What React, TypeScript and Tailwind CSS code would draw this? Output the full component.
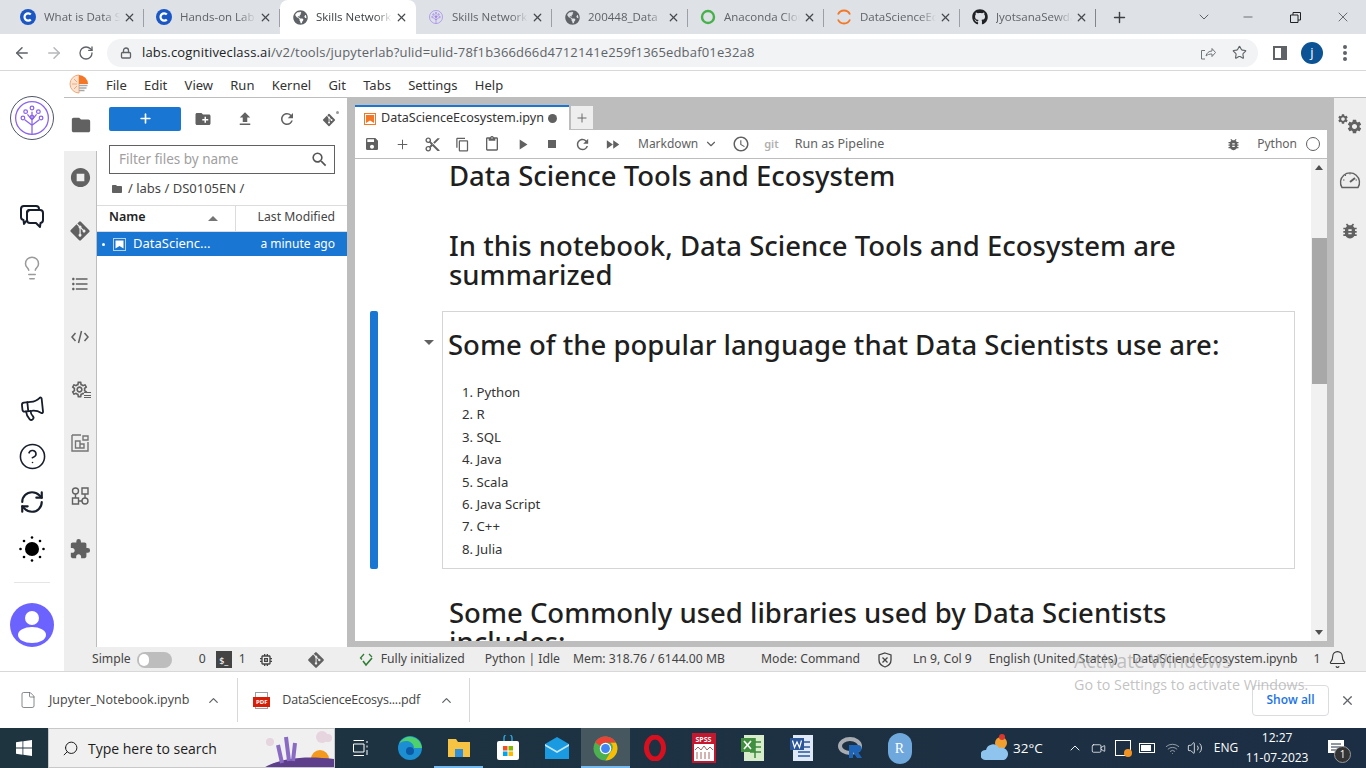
import {
  ArrowLeft,
  ArrowRight,
  RotateCw,
  Lock,
  Star,
  X,
  Plus,
  ChevronDown,
  ChevronUp,
  Minus,
  Lightbulb,
  Megaphone,
  CircleHelp,
  RefreshCw,
  Search,
  File,
  Bell,
  Volume2,
  Wifi,
  Video,
} from "lucide-react";
import {
  MdFolder,
  MdCreateNewFolder,
  MdFileUpload,
  MdRefresh,
  MdSave,
  MdContentCut,
  MdContentCopy,
  MdContentPaste,
  MdPlayArrow,
  MdStop,
  MdFastForward,
  MdAccessTime,
  MdBugReport,
  MdExtension,
  MdStopCircle,
  MdFormatListBulleted,
  MdOutlineSettings,
  MdSettings,
  MdMemory,
  MdSearch,
} from "react-icons/md";
import { FaGitAlt, FaGithub, FaGlobeAmericas } from "react-icons/fa";

const jupyter = "font-['Noto_Sans',sans-serif]";
const chrome = "font-['Open_Sans',sans-serif]";

function CIcon() {
  return (
    <svg width="16" height="16" viewBox="0 0 16 16">
      <circle cx="8" cy="8" r="8" fill="#1a56c4" />
      <path d="M10.8 5.6a3.6 3.6 0 1 0 0 4.8" fill="none" stroke="#fff" strokeWidth="2.2" />
    </svg>
  );
}

function TreeLogo({ size = 16 }: { size?: number }) {
  return (
    <svg width={size} height={size} viewBox="0 0 44 44" fill="none" stroke="#8a63f0" strokeWidth="1.4">
      <circle cx="22" cy="22" r="18" />
      <path d="M22 40V15M22 30l-8-6M22 30l8-6M22 24l-5-6M22 24l5-6" />
      <circle cx="22" cy="11" r="2" />
      <circle cx="15" cy="15" r="2" />
      <circle cx="29" cy="15" r="2" />
      <circle cx="12" cy="22" r="2" />
      <circle cx="32" cy="22" r="2" />
      <circle cx="22" cy="21" r="2" />
    </svg>
  );
}

const tabs = [
  { title: "What is Data Science", icon: <CIcon /> },
  { title: "Hands-on Lab", icon: <CIcon /> },
  { title: "Skills Network", icon: <FaGlobeAmericas size={15} className="text-[#5f6368]" />, active: true },
  { title: "Skills Network", icon: <TreeLogo /> },
  { title: "200448_Data", icon: <FaGlobeAmericas size={15} className="text-[#5f6368]" /> },
  {
    title: "Anaconda Cloud",
    icon: (
      <svg width="16" height="16" viewBox="0 0 16 16">
        <circle cx="8" cy="8" r="6" fill="none" stroke="#46b04a" strokeWidth="2.4" />
      </svg>
    ),
  },
  {
    title: "DataScienceEco",
    icon: (
      <svg width="16" height="16" viewBox="0 0 16 16" fill="none" stroke="#f37726" strokeWidth="1.8">
        <path d="M2 5.5a6.5 6.5 0 0 1 12 0M2 10.5a6.5 6.5 0 0 0 12 0" />
      </svg>
    ),
  },
  { title: "JyotsanaSewda", icon: <FaGithub size={16} className="text-[#202124]" /> },
];

function ChromeTab({ title, icon, active, last }: { title: string; icon: React.ReactNode; active?: boolean; last?: boolean }) {
  return (
    <div className={`w-[136px] h-[34px] shrink-0 flex items-center relative pl-3 pr-2 ${active ? "bg-white rounded-t-lg" : ""}`}>
      <div className="w-4 h-4 shrink-0 flex items-center justify-center">{icon}</div>
      <div
        className={`ml-2 w-[76px] overflow-hidden whitespace-nowrap text-[11.5px] [mask-image:linear-gradient(to_right,black_78%,transparent)] ${
          active ? "text-[#3c4043]" : "text-[#5f6368]"
        }`}
      >
        {title}
      </div>
      <X size={13} strokeWidth={2.2} className="ml-auto text-[#45484c]" />
      {!active && <div className={`absolute right-0 top-[9px] h-[18px] w-px ${last ? "bg-[#80868b]" : "bg-[#9aa0a6]"}`} />}
    </div>
  );
}

function Rail({ children, active }: { children: React.ReactNode; active?: boolean }) {
  return (
    <div className={`h-[53px] flex items-center justify-center text-[#616161] ${active ? "bg-white" : "border-r border-[#bdbdbd]"}`}>{children}</div>
  );
}

function ToolBtn({ children }: { children: React.ReactNode }) {
  return <div className="w-[30px] h-full flex items-center justify-center text-[#616161] shrink-0">{children}</div>;
}

function Heading({ children, className = "" }: { children: React.ReactNode; className?: string }) {
  return <h1 className={`text-[27.5px] leading-[29.5px] font-medium text-[#1f1f1f] ${className}`}>{children}</h1>;
}

function TaskCell({ children, active, open }: { children: React.ReactNode; active?: boolean; open?: boolean }) {
  return (
    <div className={`w-[49px] h-[40px] shrink-0 flex items-center justify-center relative ${active ? "bg-[#46575f]" : ""}`}>
      {children}
      {(open || active) && <div className="absolute left-0 right-0 bottom-0 h-[2px] bg-[#76b9ed]" />}
    </div>
  );
}

export default function App() {
  const langs = ["Python", "R", "SQL", "Java", "Scala", "Java Script", "C++", "Julia"];
  return (
    <div className="w-[1366px] h-[768px] flex flex-col overflow-hidden bg-white relative">
      {/* chrome tab strip */}
      <div className={`h-[34px] bg-[#dee1e6] flex items-center pl-2 shrink-0 ${chrome}`}>
        {tabs.map((t, i) => (
          <ChromeTab key={i} title={t.title} icon={t.icon} active={t.active} last={i === 7} />
        ))}
        <Plus size={17} strokeWidth={2} className="ml-[15px] text-[#3c4043]" />
        <div className="ml-auto flex items-center text-[#3c4043]">
          <ChevronDown size={16} strokeWidth={1.2} className="mr-[29px]" />
          <Minus size={14} strokeWidth={1.2} className="mr-[35px]" />
          <svg width="11" height="11" viewBox="0 0 11 11" fill="none" stroke="#202124" className="mr-[34px]">
            <path d="M0.5 3H8V10.5H0.5ZM3 3V0.5H10.5V8H8" />
          </svg>
          <X size={16} strokeWidth={1.1} className="mr-[15px]" />
        </div>
      </div>
      {/* chrome toolbar */}
      <div className={`h-[37px] pt-px border-b border-[#d8d8d8] flex items-center shrink-0 ${chrome}`}>
        <ArrowLeft size={18} strokeWidth={2} className="ml-[13px] text-[#5f6368]" />
        <ArrowRight size={18} strokeWidth={2} className="ml-[14px] text-[#b5b8bb]" />
        <RotateCw size={16} strokeWidth={2} className="ml-[15px] text-[#5f6368]" />
        <div className="ml-[13px] w-[1151px] h-[28px] rounded-full bg-[#f1f3f4] flex items-center pl-[13px]">
          <Lock size={12} strokeWidth={2.6} className="text-[#5f6368]" />
          <span className="ml-[10px] text-[13px] text-[#5f6368] whitespace-nowrap tracking-[0.17px]">
            <span className="text-[#202124]">labs.cognitiveclass.ai</span>/v2/tools/jupyterlab?ulid=ulid-78f1b366d66d4712141e259f1365edbaf01e32a8
          </span>
          <svg width="16" height="16" viewBox="0 0 16 16" fill="none" stroke="#70757a" strokeWidth="1" className="ml-auto mr-[16px]">
            <path d="M5 14H1.5V5.5H5M6 11c.5-3 3-5 6-5V3.5l3.5 4-3.5 4V9c-2.500 0-4.500.5-6 2Z" />
          </svg>
          <Star size={15} strokeWidth={1.8} className="mr-[11px] text-[#5f6368]" />
        </div>
        <svg width="14" height="14" viewBox="0 0 14 14" className="ml-[15px]">
          <path d="M0 0H14V14H0Z" fill="#5f6368" />
          <path d="M2 2H8V12H2Z" fill="#fff" />
        </svg>
        <div className="ml-[14px] w-[22px] h-[22px] rounded-full bg-[#0b5394] text-white text-[13px] flex items-center justify-center">j</div>
        <div className="ml-[20px] flex flex-col gap-[2px]">
          <div className="w-[4px] h-[4px] rounded-full bg-[#5f6368]" />
          <div className="w-[4px] h-[4px] rounded-full bg-[#5f6368]" />
          <div className="w-[4px] h-[4px] rounded-full bg-[#5f6368]" />
        </div>
      </div>

      {/* page */}
      <div className="h-[600px] flex shrink-0 relative">
        {/* skills network side */}
        <div className="w-[64px] shrink-0 flex flex-col items-center bg-white text-[#161d2b]">
          <div className="mt-[25px] w-[44px] h-[44px] rounded-full border border-[#4d5566] flex items-center justify-center">
            <TreeLogo size={40} />
          </div>
          <svg width="26" height="26" viewBox="0 0 26 26" fill="none" stroke="#161d2b" strokeWidth="2" strokeLinejoin="round" className="mt-[64px]">
            <path d="M5 2H17a3 3 0 0 1 3 3V6H11a3 3 0 0 0-3 3V16L5 20L4.500 16A3 3 0 0 1 2 13V5A3 3 0 0 1 5 2Z" />
            <path d="M11 6H21a3 3 0 0 1 3 3V16a3 3 0 0 1-2.500 3L21 23L17 19H11a3 3 0 0 1-3-3V9A3 3 0 0 1 11 6Z" />
          </svg>
          <Lightbulb size={26} strokeWidth={1.4} className="mt-[25px] text-[#9a9a9a]" />
          <Megaphone size={27} strokeWidth={1.6} className="mt-[114px] -rotate-6" />
          <CircleHelp size={29} strokeWidth={1.3} className="mt-[20px]" />
          <RefreshCw size={26} strokeWidth={2} className="mt-[18px]" />
          <svg width="28" height="28" viewBox="0 0 28 28" className="mt-[20px] text-black" fill="currentColor">
            <circle cx="14" cy="14" r="7" />
            <circle cx="14" cy="2.500" r="1.300" />
            <circle cx="14" cy="25.500" r="1.300" />
            <circle cx="2.500" cy="14" r="1.300" />
            <circle cx="25.500" cy="14" r="1.300" />
            <circle cx="6" cy="6" r="1.300" />
            <circle cx="22" cy="6" r="1.300" />
            <circle cx="6" cy="22" r="1.300" />
            <circle cx="22" cy="22" r="1.300" />
          </svg>
          <div className="mt-[19px] w-[36px] h-px bg-[#e5e5e5]" />
          <svg width="44" height="44" viewBox="0 0 44 44" className="mt-[20px]">
            <circle cx="22" cy="22" r="22" fill="#6c63ff" />
            <circle cx="22" cy="15" r="7" fill="#fff" />
            <ellipse cx="22" cy="32" rx="14" ry="8" fill="#fff" />
          </svg>
        </div>

        {/* jupyterlab */}
        <div className={`flex-1 min-w-0 flex flex-col ${jupyter}`}>
          <div className="h-[27px] pt-[3px] border-b border-[#bdbdbd] flex items-center text-[13px] text-[#333] shrink-0">
            <svg width="20" height="20" viewBox="0 0 20 20" className="ml-[5px] -mt-[3px]" fill="none">
              <path d="M10 1a9 9 0 0 0 0 18Z" fill="#fbe3d2" stroke="#f0a878" />
              <path d="M5 5l3 3M3 10h5M5 15l3-3" stroke="#f0a878" />
              <path d="M10 1a9 9 0 0 1 9 9h-9Z" fill="#f37726" />
              <path d="M10 11.500h8.500M10 14h7.500M10 16.500h5.500" stroke="#a8a8a8" strokeWidth="1.400" />
            </svg>
            <div className="ml-[17px] flex gap-[17.250px]">
              {["File", "Edit", "View", "Run", "Kernel", "Git", "Tabs", "Settings", "Help"].map((m) => (
                <span key={m}>{m}</span>
              ))}
            </div>
          </div>
          <div className="flex-1 min-h-0 flex">
            {/* rail */}
            <div className="w-[33px] shrink-0 bg-[#eeeeee] flex flex-col">
              <Rail active><MdFolder size={22} /></Rail>
              <Rail><MdStopCircle size={23} /></Rail>
              <Rail><FaGitAlt size={22} /></Rail>
              <Rail><MdFormatListBulleted size={20} /></Rail>
              <Rail>
                <svg width="18" height="14" viewBox="0 0 18 14" fill="none" stroke="#616161" strokeWidth="1.500">
                  <path d="M4.500 3L1 7L4.500 11M13.500 3L17 7L13.500 11M10.500 1L7.500 13" />
                </svg>
              </Rail>
              <Rail>
                <div className="flex items-end">
                  <MdOutlineSettings size={19} />
                  <div className="-ml-[5px] mb-[1px] w-[7px] h-[6px] border-y border-[#616161] flex items-center bg-[#eeeeee]">
                    <div className="w-full h-px bg-[#616161]" />
                  </div>
                </div>
              </Rail>
              <Rail>
                <svg width="18" height="18" viewBox="0 0 18 18" fill="none" stroke="#757575" strokeWidth="1.4">
                  <path d="M1 1H10M17 8V17H1V1" />
                  <path d="M4.500 7H9V14H4.500ZM9 10H13V14H9Z" />
                  <path d="M12 2H17V6H12Z" />
                </svg>
              </Rail>
              <Rail>
                <svg width="18" height="18" viewBox="0 0 18 18" fill="none" stroke="#616161" strokeWidth="1.4">
                  <circle cx="4.500" cy="4" r="3" />
                  <path d="M11 1H17V7H11ZM1.500 11H7.500V17H1.500Z" />
                  <circle cx="14" cy="14" r="3" />
                  <path d="M7.500 14H11M14 7V11M4.500 7V11" />
                </svg>
              </Rail>
              <Rail><MdExtension size={22} /></Rail>
              <div className="flex-1 border-r border-[#bdbdbd]" />
            </div>
            {/* file browser */}
            <div className="w-[250px] shrink-0 bg-white flex flex-col text-[#333]">
              <div className="h-[33px] mt-[4px] flex items-center pl-[12px] text-[#616161]">
                <div className="w-[72px] h-[24px] rounded-[2px] bg-[#1976d2] flex items-center justify-center text-white">
                  <Plus size={15} strokeWidth={2.6} />
                </div>
                <MdCreateNewFolder size={18} className="ml-[13px]" />
                <MdFileUpload size={18} className="ml-[24px]" />
                <MdRefresh size={18} className="ml-[24px]" />
                <div className="ml-[26px] flex items-start">
                  <FaGitAlt size={14} className="mt-[2px]" />
                  <span className="w-[3px] h-[3px] bg-[#999] rounded-full" />
                </div>
              </div>
              <div className="mt-[10px] ml-[12px] w-[226px] h-[29px] border border-[#616161] flex items-center pl-[9px] pr-[5px] text-[13.500px] text-[#a0a0a0]">
                Filter files by name
                <MdSearch size={19} className="ml-auto text-[#555]" />
              </div>
              <div className="mt-[6px] ml-[14px] h-[18px] flex items-center text-[13px] text-[#444]">
                <MdFolder size={12} className="text-[#616161]" />
                <span className="ml-[5px] whitespace-nowrap">/ labs / DS0105EN /</span>
              </div>
              <div className="mt-[7px] h-[27px] border-y border-[#dcdcdc] flex items-center text-[12.500px]">
                <div className="w-[139px] h-full flex items-center pl-[12px] pb-[2px] border-r border-[#dcdcdc] font-semibold relative text-[#222]">
                  Name
                  <div className="absolute right-[17px] top-[10px] w-0 h-0 border-x-[5px] border-x-transparent border-b-[5px] border-b-[#757575]" />
                </div>
                <div className="flex-1 text-right pr-[12px] pb-[2px] text-[12.200px] text-[#444]">Last Modified</div>
              </div>
              <div className="h-[24px] bg-[#1976d2] text-white text-[13px] flex items-center">
                <div className="ml-[5px] w-[3px] h-[3px] rounded-full bg-white" />
                <div className="ml-[8px] w-[13px] h-[13px] border border-[#b5d3f0] flex items-center justify-center">
                  <svg width="9" height="9" viewBox="0 0 9 9"><path d="M0.5 0.5H8.500V8.500L4.500 6L0.500 8.500Z" fill="#fff" /></svg>
                </div>
                <span className="ml-[7px] whitespace-nowrap">DataScienc...</span>
                <span className="ml-auto mr-[12px] text-[12px]">a minute ago</span>
              </div>
            </div>
            {/* main area */}
            <div className="flex-1 min-w-0 bg-[#bdbdbd] flex pl-[8px]">
              <div className="w-[972px] flex flex-col pt-[7px] pb-[6px]">
                <div className="h-[25px] flex shrink-0">
                  <div className="w-[214px] h-full bg-white border-t-2 border-[#1976d2] flex items-center pl-[9px] text-[12.600px] text-[#333]">
                    <div className="w-[12px] h-[12px] border border-[#f37726] flex items-center justify-center">
                      <svg width="8" height="8" viewBox="0 0 8 8"><path d="M0 0H8V8L4 5.500L0 8Z" fill="#f37726" /></svg>
                    </div>
                    <span className="ml-[5px] whitespace-nowrap">DataScienceEcosystem.ipyn</span>
                    <div className="ml-[4px] w-[9px] h-[9px] rounded-full bg-[#616161]" />
                  </div>
                  <div className="ml-px w-[24px] h-full bg-[#eeeeee] border border-[#bdbdbd] flex items-center justify-center text-[#616161]">
                    <Plus size={14} strokeWidth={1.6} />
                  </div>
                </div>
                <div className="h-[29px] bg-white border-b border-[#bdbdbd] flex items-center pl-[2px] text-[12px] text-[#616161] shrink-0">
                  <ToolBtn><MdSave size={16} /></ToolBtn>
                  <ToolBtn><Plus size={15} strokeWidth={1.6} /></ToolBtn>
                  <ToolBtn><MdContentCut size={17} /></ToolBtn>
                  <ToolBtn><MdContentCopy size={15} /></ToolBtn>
                  <ToolBtn><MdContentPaste size={16} /></ToolBtn>
                  <ToolBtn><MdPlayArrow size={17} /></ToolBtn>
                  <ToolBtn><MdStop size={16} /></ToolBtn>
                  <ToolBtn><MdRefresh size={17} /></ToolBtn>
                  <ToolBtn><MdFastForward size={17} /></ToolBtn>
                  <span className="ml-[11px]">Markdown</span>
                  <ChevronDown size={14} className="ml-[6px]" />
                  <MdAccessTime size={18} className="ml-[14px]" />
                  <span className="ml-[14px] text-[11px] font-semibold text-[#b0b0b0]">git</span>
                  <span className="ml-[16px] text-[12.500px]">Run as Pipeline</span>
                  <MdBugReport size={15} className="ml-auto" />
                  <span className="ml-[16px]">Python</span>
                  <div className="ml-[9px] mr-[7px] w-[14px] h-[14px] rounded-full border border-[#616161]" />
                </div>
                {/* notebook */}
                <div className="flex-1 min-h-0 bg-white flex overflow-hidden">
                  <div className="flex-1 min-w-0 overflow-hidden pt-[2px]">
                    <Heading className="ml-[94px]">Data Science Tools and Ecosystem</Heading>
                    <Heading className="ml-[94px] mt-[40px] w-[760px]">In this notebook, Data Science Tools and Ecosystem are summarized</Heading>
                    <div className="mt-[21px] flex relative">
                      <div className="ml-[15px] w-[8px] h-[258px] rounded-[2px] bg-[#1976d2]" />
                      <div className="w-0 h-0 mt-[29px] ml-[46px] border-x-[5px] border-x-transparent border-t-[5px] border-t-[#616161]" />
                      <div className="ml-[8px] w-[853px] h-[258px] border border-[#d5d5d5] pl-[5px] pt-[18px]">
                        <Heading>Some of the popular language that Data Scientists use are:</Heading>
                        <ol className="mt-[22px] text-[13.200px] text-[#333] leading-[22.4px]">
                          {langs.map((l, i) => (
                            <li key={l} className="pl-[14px]">{i + 1}. {l}</li>
                          ))}
                        </ol>
                      </div>
                    </div>
                    <Heading className="ml-[94px] mt-[29px] w-[760px]">Some Commonly used libraries used by Data Scientists includes:</Heading>
                  </div>
                  {/* scrollbar */}
                  <div className="w-[16px] shrink-0 bg-[#f1f1f1] flex flex-col items-center">
                    <div className="mt-[6px] w-0 h-0 border-x-[4px] border-x-transparent border-b-[5px] border-b-[#505050]" />
                    <div className="mt-[68px] w-[15px] h-[146px] bg-[#a8a8a8]" />
                    <div className="mt-auto mb-[6px] w-0 h-0 border-x-[4px] border-x-transparent border-t-[5px] border-t-[#505050]" />
                  </div>
                </div>
              </div>
              <div className="ml-[7px] flex-1 bg-[#eeeeee] flex flex-col items-center text-[#616161]">
                <div className="mt-[15px] h-[22px] flex">
                  <MdSettings size={12} className="-mr-[3px]" />
                  <MdSettings size={17} className="mt-[5px]" />
                </div>
                <svg width="22" height="20" viewBox="0 0 22 20" fill="none" stroke="#616161" strokeWidth="1.400" className="mt-[34px]">
                  <path d="M3 18.500a9.500 9.500 0 1 1 16 0Z" />
                  <path d="M11 13l5-4" strokeWidth="2" />
                  <path d="M4 11h1.500M6 6l1 1M11 4v1.500M18 11h-1.500" strokeWidth="1" />
                </svg>
                <MdBugReport size={20} className="mt-[32px]" />
              </div>
            </div>
          </div>
          {/* status bar */}
          <div className="h-[24px] pt-px shrink-0 bg-[#eeeeee] flex items-center text-[12.200px] text-[#444] whitespace-nowrap">
            <span className="ml-[28px]">Simple</span>
            <div className="ml-[6px] w-[35px] h-[16px] rounded-full bg-[#bdbdbd] flex items-center pl-[2px]">
              <div className="w-[10px] h-[12px] rounded-full bg-white" />
            </div>
            <span className="ml-[27px]">0</span>
            <div className="ml-[10px] w-[16px] h-[17px] bg-[#444] text-white text-[9px] flex items-end justify-center leading-[14px]">$_</div>
            <span className="ml-[7px]">1</span>
            <MdMemory size={16} className="ml-[12px]" />
            <FaGitAlt size={18} className="ml-[33px] text-[#616161]" />
            <svg width="16" height="16" viewBox="0 0 16 16" fill="none" className="ml-[34px]">
              <path d="M5 2L1.500 6l1.500 1.500M10 2l3 3" stroke="#2e7d32" strokeWidth="1.300" />
              <path d="M4 9l3 4 6-7" stroke="#2e7d32" strokeWidth="1.600" />
            </svg>
            <span className="ml-[6px]">Fully initialized</span>
            <span className="ml-[20px]">Python | Idle</span>
            <span className="ml-[13px]">Mem: 318.76 / 6144.00 MB</span>
            <span className="ml-[36px]">Mode: Command</span>
            <svg width="16" height="16" viewBox="0 0 16 16" fill="none" stroke="#444" strokeWidth="1.300" className="ml-[17px]">
              <path d="M8 1L14 3V8C14 11.500 11 14 8 15C5 14 2 11.500 2 8V3Z" />
              <path d="M5.500 5.500L10.500 10.500M10.500 5.500L5.500 10.500" />
            </svg>
            <span className="ml-[20px]">Ln 9, Col 9</span>
            <span className="ml-[17px]">English (United States)</span>
            <span className="ml-[15px]">DataScienceEcosystem.ipynb</span>
            <span className="ml-[16px]">1</span>
            <Bell size={19} strokeWidth={1.4} className="ml-[7px] text-[#333]" />
          </div>
        </div>
      </div>

      {/* download shelf */}
      <div className={`h-[57px] shrink-0 border-t border-[#d8d8d8] flex items-center text-[#444] text-[12.500px] ${chrome}`}>
        <File size={18} strokeWidth={1} className="ml-[19px] text-[#5f6368]" />
        <span className="ml-[12px]">Jupyter_Notebook.ipynb</span>
        <ChevronUp size={15} strokeWidth={2} className="ml-[17px] text-[#5f6368]" />
        <div className="ml-[16px] w-px h-[44px] bg-[#d8d8d8]" />
        <div className="ml-[15px] w-[17px] flex flex-col items-center">
          <div className="w-[13px] h-[5px] border border-b-0 border-[#9aa0a6]" />
          <div className="w-[17px] h-[10px] bg-[#d81e06] text-white text-[6px] leading-[10px] font-bold text-center">PDF</div>
          <div className="w-[13px] h-[2px] border border-t-0 border-[#9aa0a6]" />
        </div>
        <span className="ml-[12px] tracking-[-0.2px]">DataScienceEcosys....pdf</span>
        <ChevronUp size={15} strokeWidth={2} className="ml-[19px] text-[#5f6368]" />
        <div className="ml-[15px] w-px h-[44px] bg-[#d8d8d8]" />
        <div className="ml-auto w-[77px] h-[31px] border border-[#dadce0] rounded-[4px] flex items-center justify-center text-[#1a73e8] font-semibold text-[12px]">Show all</div>
        <X size={15} strokeWidth={2} className="ml-[11px] mr-[11px] text-[#5f6368]" />
      </div>

      {/* taskbar */}
      <div className={`h-[40px] shrink-0 bg-gradient-to-r from-[#1e3540] to-[#1c2e44] flex items-center text-white ${chrome}`}>
        <div className="w-[48px] flex justify-center">
          <svg width="16" height="16" viewBox="0 0 16 16" fill="#fff">
            <path d="M0 2.200L6.500 1.300V7.600H0ZM7.300 1.200L16 0V7.600H7.300ZM0 8.400H6.500V14.700L0 13.800ZM7.300 8.400H16V16L7.300 14.800Z" />
          </svg>
        </div>
        <div className="w-[287px] h-[40px] bg-[#f0f0f0] border border-[#c8c8c8] flex items-center text-[#1c1c1c] text-[14px] relative overflow-hidden">
          <Search size={17} strokeWidth={1.4} className="ml-[13px] -scale-x-100" />
          <span className="ml-[9px]">Type here to search</span>
          <svg width="72" height="40" viewBox="0 0 72 40" className="absolute right-0 top-0">
            <circle cx="60" cy="8" r="6" fill="#e6d4df" />
            <circle cx="66" cy="9" r="4" fill="#e6d4df" />
            <circle cx="8" cy="13" r="4" fill="#e6d4df" />
            <circle cx="58" cy="30" r="9" fill="#f39a1e" />
            <path d="M0 40C15 30 40 26 72 30V40Z" fill="#5e3f8c" />
            <path d="M16 16L20 34M24 8L27 32M33 14L31 32" stroke="#8a6bc4" strokeWidth="4" />
          </svg>
        </div>
        <div className="w-[49px] ml-[1px] flex justify-center">
          <svg width="16" height="16" viewBox="0 0 16 16" fill="none" stroke="#fff">
            <path d="M0.500 0.500H11M0.500 15.500H11M0.500 4H11V12H0.500ZM14 1V3M14 5.500V7.500M14 10V15" />
          </svg>
        </div>
        <TaskCell>
          <svg width="26" height="26" viewBox="0 0 26 26">
            <circle cx="13" cy="13" r="12" fill="#1b8fd1" />
            <path d="M25 13a12 12 0 0 0-23-4c3-4 13-5 15 3 0 3-6 3-6 1" fill="#4fd06f" />
            <circle cx="13" cy="16" r="4" fill="#0c5aa6" />
          </svg>
        </TaskCell>
        <TaskCell open>
          <svg width="24" height="20" viewBox="0 0 24 20">
            <path d="M1 1H9L11 4H23V19H1Z" fill="#f6c343" />
            <path d="M8 11H16V19H8Z" fill="#2f8fd8" />
          </svg>
        </TaskCell>
        <TaskCell>
          <svg width="24" height="26" viewBox="0 0 24 26">
            <path d="M8 6V3a4 4 0 0 1 8 0V6" fill="none" stroke="#29a3d8" strokeWidth="1.500" />
            <rect x="1" y="6" width="22" height="19" rx="2" fill="#fff" />
            <rect x="7" y="11" width="4.500" height="4.500" fill="#f25022" />
            <rect x="12.500" y="11" width="4.500" height="4.500" fill="#7fba00" />
            <rect x="7" y="16.500" width="4.500" height="4.500" fill="#00a4ef" />
            <rect x="12.500" y="16.500" width="4.500" height="4.500" fill="#ffb900" />
          </svg>
        </TaskCell>
        <TaskCell>
          <svg width="26" height="24" viewBox="0 0 26 24">
            <path d="M1 8L13 1L25 8V23H1Z" fill="#1a9ae0" />
            <path d="M1 8L13 15L25 8V10L13 17L1 10Z" fill="#bfe6fa" />
          </svg>
        </TaskCell>
        <TaskCell active>
          <svg width="25" height="25" viewBox="0 0 48 48">
            <circle cx="24" cy="24" r="23" fill="#4caf50" />
            <path d="M24 1a23 23 0 0 1 20 12H24a11 11 0 0 0-10 6L4 12A23 23 0 0 1 24 1Z" fill="#ea4335" />
            <path d="M44 13a23 23 0 0 1-20 34l10-17a11 11 0 0 0 0-17Z" fill="#fbbc05" />
            <circle cx="24" cy="24" r="11" fill="#fff" />
            <circle cx="24" cy="24" r="8.500" fill="#4285f4" />
          </svg>
        </TaskCell>
        <TaskCell>
          <svg width="22" height="26" viewBox="0 0 22 26">
            <ellipse cx="11" cy="13" rx="8.500" ry="11" fill="none" stroke="#d80f1e" strokeWidth="5" />
          </svg>
        </TaskCell>
        <TaskCell>
          <div className="w-[24px] h-[30px] bg-white border-2 border-[#c5172e] flex flex-col items-center">
            <span className="bg-[#c5172e] w-full text-center text-[7px] font-bold leading-[9px] text-white">SPSS</span>
            <svg width="18" height="15" viewBox="0 0 18 15" fill="none" stroke="#a66" strokeWidth="1">
              <path d="M0 6L3 3L6 6L9 2L12 6L15 3L18 6M2 8V15M6 8V15M10 8V15M14 8V15" />
            </svg>
          </div>
        </TaskCell>
        <TaskCell>
          <svg width="24" height="28" viewBox="0 0 24 28">
            <rect x="3" y="1" width="20" height="26" fill="#d7ecc8" />
            <path d="M9 8H20M9 13H20M9 18H20M14 4V24" stroke="#3b8a3b" strokeWidth="1.500" />
            <rect x="0" y="4" width="14" height="14" fill="#3f8f3f" />
            <path d="M3 7L10 15M10 7L3 15" stroke="#fff" strokeWidth="1.600" />
          </svg>
        </TaskCell>
        <TaskCell>
          <svg width="24" height="28" viewBox="0 0 24 28">
            <rect x="3" y="1" width="20" height="26" fill="#dfe8f6" />
            <path d="M12 8H20M12 13H20M8 18H20M8 22H20" stroke="#2b579a" strokeWidth="1.500" />
            <rect x="0" y="4" width="14" height="12" fill="#2b579a" />
            <path d="M2.500 6.500L4.500 13.500L7 8L9.500 13.500L11.500 6.500" stroke="#fff" fill="none" strokeWidth="1.200" />
          </svg>
        </TaskCell>
        <TaskCell>
          <svg width="26" height="22" viewBox="0 0 26 22">
            <ellipse cx="12" cy="9" rx="10" ry="7" fill="none" stroke="#a9adb2" strokeWidth="4" />
            <path d="M11 8H20a3 3 0 0 1 0 7L24 21H19L15 15V21H11Z" fill="#1f65b7" />
          </svg>
        </TaskCell>
        <TaskCell>
          <div className="w-[24px] h-[31px] rounded-full bg-[#6fa8dc] text-white text-[14px] flex items-center justify-center font-['Liberation_Serif',serif]">R</div>
        </TaskCell>
        <svg width="28" height="28" viewBox="0 0 28 28" className="ml-[57px]">
          <circle cx="20" cy="9" r="6" fill="#f0a030" />
          <circle cx="21" cy="3" r="3" fill="#d9382e" />
          <path d="M4 26a5 5 0 0 1 1-10 7 7 0 0 1 13-2 6 6 0 0 1 5 12Z" fill="#8fc4ee" />
        </svg>
        <span className="ml-[4px] text-[13.500px]">32°C</span>
        <ChevronUp size={16} strokeWidth={1.4} className="ml-[24px]" />
        <Video size={15} strokeWidth={1.2} className="ml-[8px]" />
        <div className="ml-[9px] w-[16px] h-[16px] border border-white relative">
          <div className="absolute -right-[2px] -bottom-[2px] w-[8px] h-[8px] rounded-full bg-[#f29423]" />
        </div>
        <div className="ml-[8px] w-[16px] h-[10px] border border-white p-px">
          <div className="w-[10px] h-full bg-white" />
        </div>
        <Wifi size={15} strokeWidth={1.2} className="ml-[10px] text-[#b8c0c8]" />
        <Volume2 size={16} strokeWidth={1.2} className="ml-[7px]" />
        <span className="ml-[11px] text-[12px]">ENG</span>
        <div className="ml-0 w-[78px] text-center text-[12px] leading-[20px]">
          <div>12:27</div>
          <div>11-07-2023</div>
        </div>
        <div className="ml-[11px] relative">
          <svg width="18" height="18" viewBox="0 0 18 18"><path d="M1 1H17V14H1Z" fill="#fff" /><path d="M4 5H14M4 8H14M4 11H14" stroke="#1c2e44" /></svg>
          <div className="absolute left-[7px] top-[7px] w-[17px] h-[17px] rounded-full bg-[#333] border border-[#999] text-[10px] flex items-center justify-center">1</div>
        </div>
      </div>

      {/* activation watermark */}
      <div className={`absolute left-[1074px] top-[648px] pointer-events-none text-[#a8a8a8]/70 ${chrome}`}>
        <div className="text-[19.200px] leading-[26px]">Activate Windows</div>
        <div className="text-[14.300px] leading-[22px]">Go to Settings to activate Windows.</div>
      </div>
    </div>
  );
}
